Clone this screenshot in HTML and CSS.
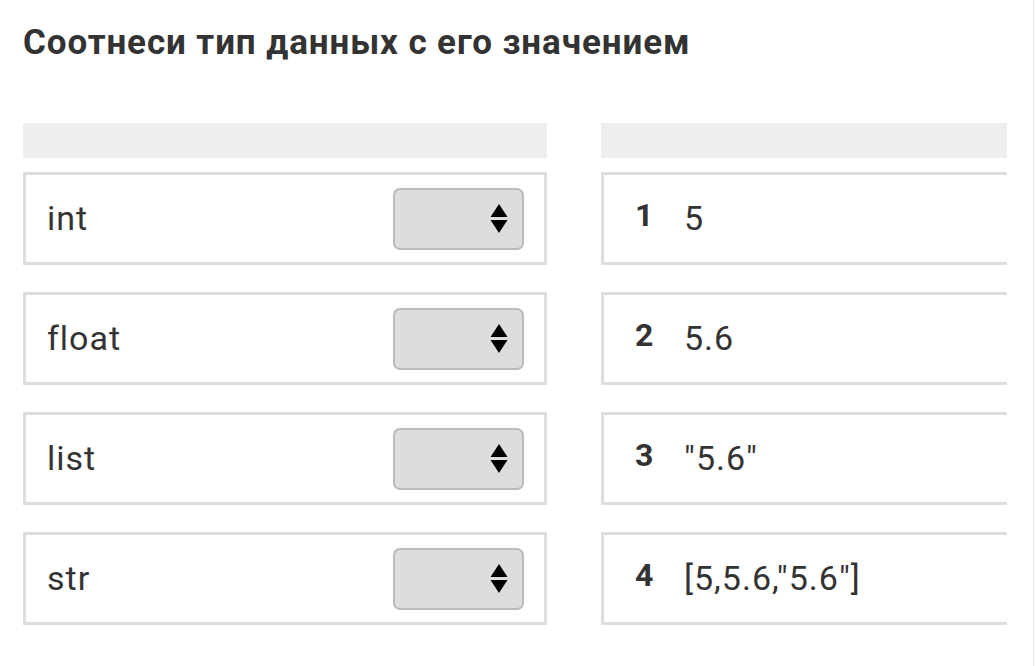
FILE: index.html
```html
<!DOCTYPE html>
<html lang="ru">
<head>
<meta charset="utf-8">
<link rel="stylesheet" href="styles.css">
</head>
<body>
<div class="page">
  <h1 class="title">Соотнеси тип данных с его значением</h1>
  <div class="columns">
    <div class="col col-left">
      <div class="head"></div>
      <div class="row"><span class="label">int</span><span class="select"><svg class="arrows" width="18" height="30" viewBox="0 0 18 30"><path d="M9 0 L17.5 13 L0.5 13 Z" fill="#000"/><path d="M0.5 16 L17.5 16 L9 29 Z" fill="#000"/></svg></span></div>
      <div class="row"><span class="label">float</span><span class="select"><svg class="arrows" width="18" height="30" viewBox="0 0 18 30"><path d="M9 0 L17.5 13 L0.5 13 Z" fill="#000"/><path d="M0.5 16 L17.5 16 L9 29 Z" fill="#000"/></svg></span></div>
      <div class="row"><span class="label">list</span><span class="select"><svg class="arrows" width="18" height="30" viewBox="0 0 18 30"><path d="M9 0 L17.5 13 L0.5 13 Z" fill="#000"/><path d="M0.5 16 L17.5 16 L9 29 Z" fill="#000"/></svg></span></div>
      <div class="row"><span class="label">str</span><span class="select"><svg class="arrows" width="18" height="30" viewBox="0 0 18 30"><path d="M9 0 L17.5 13 L0.5 13 Z" fill="#000"/><path d="M0.5 16 L17.5 16 L9 29 Z" fill="#000"/></svg></span></div>
    </div>
    <div class="col col-right">
      <div class="head"></div>
      <div class="row row-r"><span class="num">1</span><span class="val">5</span></div>
      <div class="row row-r"><span class="num">2</span><span class="val">5.6</span></div>
      <div class="row row-r"><span class="num">3</span><span class="val">"5.6"</span></div>
      <div class="row row-r"><span class="num">4</span><span class="val">[5,5.6,"5.6"]</span></div>
    </div>
  </div>
</div>
<div class="edge"></div>
</body>
</html>
```

FILE: styles.css
```css
html, body {
  margin: 0;
  padding: 0;
  background: #fff;
  overflow: hidden;
}
body {
  width: 1035px;
  height: 666px;
  font-family: Roboto, "Liberation Sans", sans-serif;
  color: #333;
  position: relative;
}
.page {
  padding: 23px 0 0 23px;
}
.title {
  margin: 1px 0 0 0;
  font-size: 35px;
  font-weight: 700;
  line-height: 38px;
  color: #333;
  letter-spacing: 0.9px;
}
.columns {
  display: flex;
  gap: 54px;
  margin-top: 61px;
}
.col {
  display: flex;
  flex-direction: column;
  gap: 27px;
}
.col-left { width: 524px; }
.col-right { width: 406px; }
.head {
  height: 35px;
  background: #eeeeee;
  margin-bottom: -13px;
}
.row {
  height: 87px;
  border: 3px solid #dddddd;
  display: flex;
  align-items: center;
  justify-content: space-between;
  padding: 0 20px 0 21px;
}
.row-r {
  border-right: none;
  justify-content: flex-start;
  padding: 0 0 0 31px;
}
.label {
  font-size: 34px;
  line-height: 1;
  color: #333;
  letter-spacing: 1px;
  margin-top: -2px;
}
.select {
  width: 117px;
  height: 58px;
  background: #dddddd;
  border: 2px solid #bbbbbb;
  border-radius: 7px;
  display: flex;
  align-items: center;
  justify-content: flex-end;
  padding-right: 14px;
  box-sizing: content-box;
}
.select { width: 113px; }
.arrows { display: block; margin-top: 1px; }
.num {
  font-size: 32px;
  line-height: 1;
  font-weight: 700;
  width: 49px;
  margin-top: -8px;
  color: #333;
}
.val {
  font-size: 34px;
  line-height: 1;
  color: #333;
  letter-spacing: 1px;
  margin-top: -2px;
}
.edge {
  position: absolute;
  top: 0;
  right: 1px;
  width: 1px;
  height: 666px;
  background: #ececec;
}
```
